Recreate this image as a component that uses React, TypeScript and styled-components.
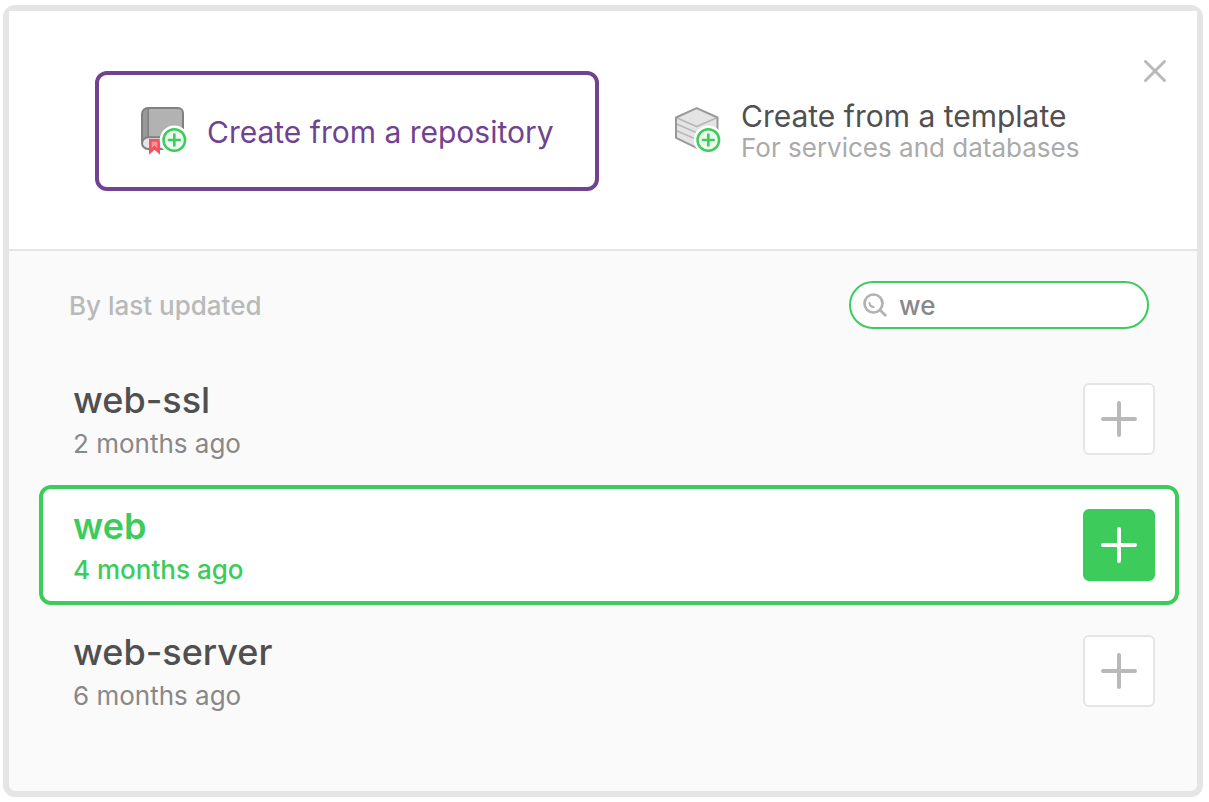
import React, { useState } from "react";
import styled, { createGlobalStyle } from "styled-components";

const color = {
  green: "#3dcb5c",
  purple: "#704290",
  frame: "#e5e5e5",
  ink: "#505050",
  grey: "#888888",
  muted: "#aaaaaa",
  faint: "#b9b9b9",
};

const GlobalStyle = createGlobalStyle`
  *, *::before, *::after { box-sizing: border-box; }
  body {
    margin: 0;
    background: #fff;
    font-family: Inter, "Liberation Sans", sans-serif;
  }
  button, input { font: inherit; }
`;

const Dialog = styled.main`
  display: flex;
  flex-direction: column;
  min-height: calc(100vh - 10px);
  margin: 5px 6px 5px 3px;
  border: 6px solid ${color.frame};
  border-radius: 12px;
  background: #fafafa;
`;

const Header = styled.header`
  display: flex;
  align-items: flex-start;
  gap: 10px;
  padding: 48px 30px 58px 86px;
  border-bottom: 2px solid ${color.frame};
  background: #fff;
`;

const Sources = styled.div`
  flex: 1;
  display: grid;
  grid-template-columns: 1fr 1fr;
  gap: 30px;
  margin-top: 12px;
`;

const SourceButton = styled.button<{ $active?: boolean }>`
  display: flex;
  align-items: center;
  gap: 20px;
  height: 120px;
  padding: 0 0 0 42px;
  border: 4px solid ${(p) => (p.$active ? color.purple : "transparent")};
  border-radius: 12px;
  background: #fff;
  color: ${(p) => (p.$active ? color.purple : color.ink)};
  text-align: left;
  white-space: nowrap;
  cursor: pointer;

  svg { flex: none; }
`;

const SourceText = styled.span`
  display: flex;
  flex-direction: column;
  padding-top: 2px;
`;

const SourceTitle = styled.span`
  font-size: 30px;
  line-height: 32px;
`;

const SourceHint = styled.span`
  font-size: 26px;
  line-height: 32px;
  color: ${color.muted};
`;

const CloseButton = styled.button`
  flex: none;
  display: flex;
  padding: 0;
  border: 0;
  background: none;
  color: ${color.faint};
  cursor: pointer;
`;

const Body = styled.section`
  flex: 1;
  padding: 30px 18px 60px 30px;
`;

const Toolbar = styled.div`
  display: flex;
  align-items: center;
  justify-content: space-between;
  padding: 0 30px;
  margin-bottom: 30px;
`;

const SortLabel = styled.h2`
  margin: 0;
  padding-top: 2px;
  font-size: 26px;
  line-height: 32px;
  font-weight: 500;
  color: ${color.faint};
`;

const SearchBox = styled.label`
  display: flex;
  align-items: center;
  gap: 12px;
  width: 300px;
  height: 48px;
  padding: 0 20px 0 12px;
  border: 2px solid ${color.green};
  border-radius: 24px;
  background: #fff;
`;

const SearchInput = styled.input`
  flex: 1;
  min-width: 0;
  padding: 2px 0 0;
  border: 0;
  outline: 0;
  background: none;
  font-size: 26px;
  line-height: 32px;
  font-weight: 500;
  color: ${color.grey};
`;

const RepoList = styled.ul`
  display: flex;
  flex-direction: column;
  gap: 6px;
  margin: 0;
  padding: 0;
  list-style: none;
`;

const RepoRow = styled.li<{ $selected: boolean }>`
  display: flex;
  align-items: center;
  justify-content: space-between;
  height: 120px;
  padding: 0 20px 0 30px;
  border: 4px solid ${(p) => (p.$selected ? color.green : "transparent")};
  border-radius: 12px;
  background: ${(p) => (p.$selected ? "#fff" : "transparent")};
`;

const RepoText = styled.div`
  padding-top: 6px;
`;

const RepoName = styled.h3<{ $selected: boolean }>`
  margin: 0;
  font-size: 36px;
  line-height: 44px;
  font-weight: ${(p) => (p.$selected ? 600 : 500)};
  color: ${(p) => (p.$selected ? color.green : color.ink)};
`;

const RepoAge = styled.p<{ $selected: boolean }>`
  margin: 0;
  font-size: 26px;
  line-height: 44px;
  font-weight: ${(p) => (p.$selected ? 500 : 400)};
  color: ${(p) => (p.$selected ? color.green : color.grey)};
`;

const AddButton = styled.button<{ $selected: boolean }>`
  display: flex;
  align-items: center;
  justify-content: center;
  width: 72px;
  height: 72px;
  padding: 0;
  border: 2px solid ${(p) => (p.$selected ? color.green : color.frame)};
  border-radius: 6px;
  background: ${(p) => (p.$selected ? color.green : "#fff")};
  color: ${(p) => (p.$selected ? "#fff" : color.faint)};
  cursor: pointer;
`;

const PlusBadge = () => (
  <>
    <circle cx="33.3" cy="33" r="14.6" fill="#fff" />
    <circle cx="33.3" cy="33" r="10.8" fill="#eafaee" stroke={color.green} strokeWidth="2.5" />
    <path d="M26.8 33h13M33.3 26.5v13" stroke={color.green} strokeWidth="2.6" />
  </>
);

const RepositoryIcon = () => (
  <svg width="46" height="48" viewBox="0 0 46 48" fill="none" aria-hidden="true">
    <path d="M6.5 1H37a5 5 0 0 1 5 5v36H6.5A5.5 5.5 0 0 1 1 36.5V6.5A5.5 5.5 0 0 1 6.5 1Z" fill="#b2b2b2" />
    <path d="M7 1A6 6 0 0 0 1 7v28a6 6 0 0 1 6-5Z" fill="#999" />
    <path d="M7.5 30.5H42V42H7a5.7 5.7 0 0 1 0-11.5Z" fill="#e6e6e6" />
    <path d="M7.2 1v29" stroke="#808080" strokeWidth="1.6" />
    <path d="M1 36.5a6.2 6.2 0 0 1 6.2-6.2H42" stroke="#808080" strokeWidth="2" />
    <path d="M7 42a6 6 0 0 1-6-6V7a6 6 0 0 1 6-6h30a5 5 0 0 1 5 5v36Z" stroke="#808080" strokeWidth="2" />
    <path d="M8 32h11v15.7l-5.5-5-5.5 5Z" fill="#f9505b" />
    <path d="M10.7 34.7h5.6v6.5l-2.8-2.6-2.8 2.6Z" fill="#fb9299" />
    <PlusBadge />
  </svg>
);

const TemplateIcon = () => (
  <svg width="46" height="48" viewBox="0 0 46 48" fill="none" aria-hidden="true">
    <path d="M1 10.5 21.7 1.2l20.8 9.3v20.3l-20.8 10L1 30.8Z" fill="#e4e4e4" />
    <path d="M1 10.5 21.7 19.5 42.5 10.5M1 16.8l20.7 9M1 23.5l20.7 9" stroke="#b8b8b8" strokeWidth="1.7" />
    <path d="M1 10.5 21.7 1.2l20.8 9.3v20.3l-20.8 10L1 30.8Z" stroke="#999" strokeWidth="2" strokeLinejoin="round" />
    <PlusBadge />
  </svg>
);

const CloseIcon = () => (
  <svg width="24" height="24" viewBox="0 0 24 24" fill="none" stroke="currentColor" strokeWidth="3" strokeLinecap="round" aria-hidden="true">
    <path d="M2.5 2.5l19 19M21.5 2.5l-19 19" />
  </svg>
);

const SearchIcon = () => (
  <svg width="24" height="24" viewBox="0 0 24 24" fill="none" stroke="#b2b2b2" strokeLinecap="round" aria-hidden="true">
    <circle cx="10.5" cy="10.5" r="9" strokeWidth="2.7" />
    <path d="M17 17l5.3 5.3" strokeWidth="2.7" />
    <path d="M6.5 10a4.6 4.6 0 0 0 4.2 4" strokeWidth="2" />
  </svg>
);

const PlusIcon = () => (
  <svg width="36" height="36" viewBox="0 0 36 36" stroke="currentColor" strokeWidth="4" strokeLinecap="round" aria-hidden="true">
    <path d="M2 18h32M18 2v32" />
  </svg>
);

const repositories = [
  { name: "web-ssl", age: "2 months ago" },
  { name: "web", age: "4 months ago" },
  { name: "web-server", age: "6 months ago" },
];

export default function App() {
  const [query, setQuery] = useState("we");
  const [selected, setSelected] = useState("web");

  return (
    <>
      <GlobalStyle />
      <Dialog>
        <Header>
          <Sources>
            <SourceButton type="button" $active>
              <RepositoryIcon />
              <SourceText>
                <SourceTitle>Create from a repository</SourceTitle>
              </SourceText>
            </SourceButton>
            <SourceButton type="button">
              <TemplateIcon />
              <SourceText>
                <SourceTitle>Create from a template</SourceTitle>
                <SourceHint>For services and databases</SourceHint>
              </SourceText>
            </SourceButton>
          </Sources>
          <CloseButton type="button" aria-label="Close">
            <CloseIcon />
          </CloseButton>
        </Header>
        <Body>
          <Toolbar>
            <SortLabel>By last updated</SortLabel>
            <SearchBox>
              <SearchIcon />
              <SearchInput
                type="text"
                aria-label="Search repositories"
                value={query}
                onChange={(e) => setQuery(e.target.value)}
              />
            </SearchBox>
          </Toolbar>
          <RepoList>
            {repositories
              .filter((repo) => repo.name.includes(query))
              .map(({ name, age }) => {
                const active = name === selected;
                return (
                  <RepoRow key={name} $selected={active}>
                    <RepoText>
                      <RepoName $selected={active}>{name}</RepoName>
                      <RepoAge $selected={active}>{age}</RepoAge>
                    </RepoText>
                    <AddButton
                      type="button"
                      $selected={active}
                      aria-label={`Add ${name}`}
                      onClick={() => setSelected(name)}
                    >
                      <PlusIcon />
                    </AddButton>
                  </RepoRow>
                );
              })}
          </RepoList>
        </Body>
      </Dialog>
    </>
  );
}
